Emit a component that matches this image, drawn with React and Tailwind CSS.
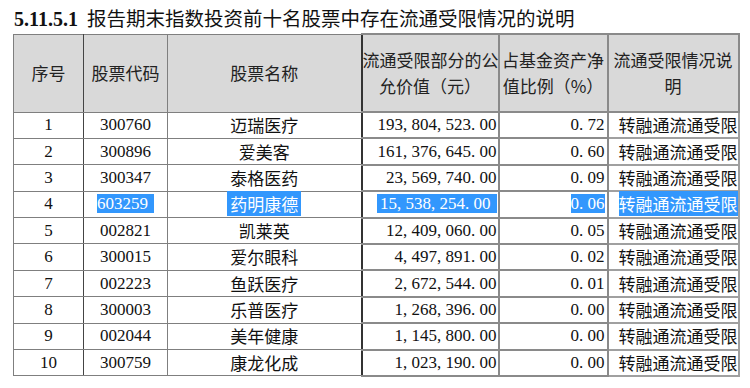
import React from 'react';

const rows = [
  { no: '1', code: '300760', name: '迈瑞医疗', value: '193,804,523.00', pct: '0.72' },
  { no: '2', code: '300896', name: '爱美客', value: '161,376,645.00', pct: '0.60' },
  { no: '3', code: '300347', name: '泰格医药', value: '23,569,740.00', pct: '0.09' },
  { no: '4', code: '603259', name: '药明康德', value: '15,538,254.00', pct: '0.06', selected: true },
  { no: '5', code: '002821', name: '凯莱英', value: '12,409,060.00', pct: '0.05' },
  { no: '6', code: '300015', name: '爱尔眼科', value: '4,497,891.00', pct: '0.02' },
  { no: '7', code: '002223', name: '鱼跃医疗', value: '2,672,544.00', pct: '0.01' },
  { no: '8', code: '300003', name: '乐普医疗', value: '1,268,396.00', pct: '0.00' },
  { no: '9', code: '002044', name: '美年健康', value: '1,145,800.00', pct: '0.00' },
  { no: '10', code: '300759', name: '康龙化成', value: '1,023,190.00', pct: '0.00' },
];

const serif = { fontFamily: '"Liberation Serif", "Noto Sans CJK SC", serif' };
const cjk = { fontFamily: '"Noto Sans CJK SC", "Liberation Sans", sans-serif' };

// SimSun-style half-width punctuation: every char takes the same cell
const Num = ({ text }) => (
  <>
    {text.split('').map((ch, i) =>
      ch === ',' || ch === '.' ? (
        <span key={i} className="inline-block w-[8.5px] text-left">{ch}</span>
      ) : (
        <span key={i}>{ch}</span>
      )
    )}
  </>
);

const Sel = ({ on, className = '', children }) =>
  on ? <span className={`bg-[#3297fd] text-white ${className}`}>{children}</span> : <>{children}</>;

const App = () => {
  return (
    <div className="w-[750px] h-[388px] bg-white text-[#111] overflow-hidden">
      <div className="h-[33px] pt-[6px] pl-[14px] leading-[24px] text-[20px] whitespace-nowrap">
        <span className="font-bold" style={serif}>5.11.5.1</span>
        <span className="ml-[9px] text-[19.5px]" style={cjk}>报告期末指数投资前十名股票中存在流通受限情况的说明</span>
      </div>

      <table className="ml-[13px] w-[725px] table-fixed border-collapse text-[17px] leading-[24px]" style={cjk}>
        <colgroup>
          <col className="w-[70px]" />
          <col className="w-[84px]" />
          <col className="w-[194px]" />
          <col className="w-[137px]" />
          <col className="w-[109px]" />
          <col className="w-[131px]" />
        </colgroup>
        <thead>
          <tr className="h-[78px] bg-[#d9d9d9] text-[#222]">
            <th className="border border-[#7f7f7f] border-r-[#444] font-normal">序号</th>
            <th className="border border-[#7f7f7f] font-normal">股票代码</th>
            <th className="border border-[#7f7f7f] border-r-[#333] font-normal">股票名称</th>
            <th className="border-2 border-[#8a8a8a] border-l-[#333] font-normal leading-[26px] whitespace-nowrap">
              流通受限部分的公<br />允价值（元）
            </th>
            <th className="border-2 border-[#8a8a8a] font-normal leading-[26px]">
              占基金资产净<br />值比例（%）
            </th>
            <th className="border-2 border-[#8a8a8a] font-normal leading-[26px] whitespace-nowrap">
              流通受限情况说<br />明
            </th>
          </tr>
        </thead>
        <tbody>
          {rows.map((r, i) => (
            <tr key={r.no} className={`h-[26.4px] ${i % 3 === 2 ? 'border-b-[#222]' : ''}`}>
              <td className="border border-[#7f7f7f] border-r-[#444] text-center" style={serif}>{r.no}</td>
              <td className="border border-[#7f7f7f] text-center" style={serif}>
                <Sel on={r.selected} className="pr-[6px]">{r.code}</Sel>
              </td>
              <td className="border border-[#7f7f7f] border-r-[#333] text-center">
                <Sel on={r.selected} className="px-[3px]">{r.name}</Sel>
              </td>
              <td className="border-2 border-[#8a8a8a] border-l-[#333] text-right pr-[1px] whitespace-nowrap" style={serif}>
                <Sel on={r.selected} className="pl-[3px] pr-[6px]"><Num text={r.value} /></Sel>
              </td>
              <td className="border-2 border-[#8a8a8a] text-right pr-[2px]" style={serif}>
                <Sel on={r.selected}><Num text={r.pct} /></Sel>
              </td>
              <td className="border-2 border-[#a0a0a0] text-right pr-0 whitespace-nowrap">
                <Sel on={r.selected}>转融通流通受限</Sel>
              </td>
            </tr>
          ))}
        </tbody>
      </table>
    </div>
  );
};

export default App;
